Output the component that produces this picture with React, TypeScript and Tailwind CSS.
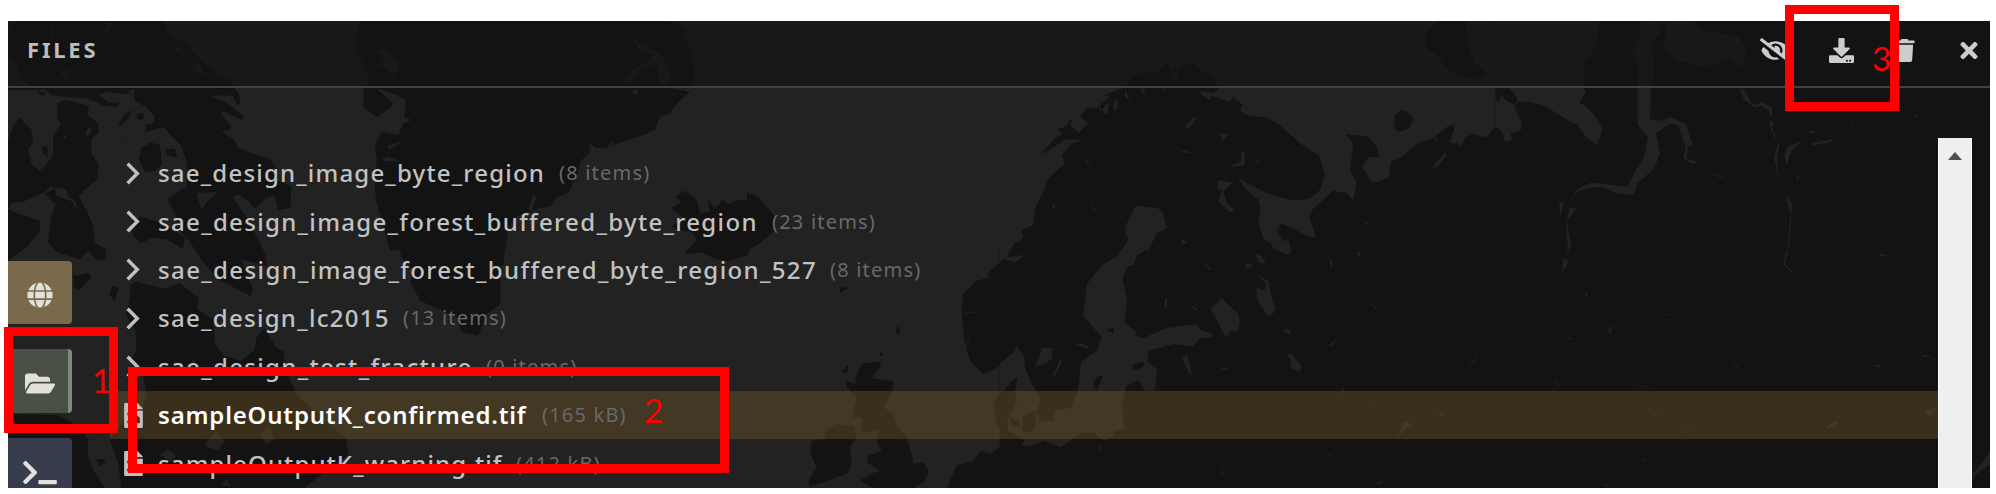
import { FaDownload, FaEyeSlash, FaFileImage, FaFolderOpen, FaGlobe, FaTerminal, FaTimes, FaTrash } from 'react-icons/fa';

type Patch = { land?: boolean; pts: string };

const northWest: Patch[] = [
  { land: true, pts: '24,63 490,63 510,110 560,130 600,180 650,220 690,240 720,290 712,312 690,270 24,270' },
  { pts: '30,100 40,70 60,63 24,63' },
  { pts: '24,170 50,195 60,235 100,265 24,265' },
  { pts: '310,100 320,70 340,66 325,100' },
  { pts: '150,85 160,75 158,120 148,110' },
  { pts: '520,150 545,140 560,180 545,165' },
  { pts: '560,210 600,190 615,225 585,215' },
  { pts: '180,212 210,207 200,220 210,240 190,230' },
  { land: true, pts: '1085,63 1501,63 1501,751 1170,751 1130,610 1125,570 1130,480 1125,435 1145,395 1195,405 1210,370 1235,360 1212,350 1218,300 1190,285 1130,265 1180,310 1170,325 1130,352 1090,320 1090,265 1110,250 1100,210 1070,160 1065,110' },
  { pts: '1130,150 1160,145 1200,190 1180,240 1165,210 1130,195 1150,180' },
  { pts: '1165,435 1208,425 1165,450' },
  { pts: '1140,480 1165,470 1205,485 1160,483' },
];

const southWest: Patch[] = [
  { land: true, pts: '1190,0 1501,-5 1501,180 1460,210 1435,275 1385,265 1370,220 1260,170 1230,110 1250,80 1210,50' },
];

const west: Patch[] = [
  { land: true, pts: '110,8 150,12 345,8 372,18 350,24 300,18 270,24 300,48 335,50 325,62 290,60 240,38 170,32 130,28' },
  { land: true, pts: '90,15 110,20 112,28 95,28' },
  { land: true, pts: '148,50 170,42 200,48 242,60 240,88 270,112 272,140 250,158 250,200 272,238 268,280 232,310 212,330 238,378 255,420 260,470 295,490 290,520 270,525 240,495 215,520 150,500 120,470 128,400 142,355 110,325 140,305 145,330 190,345 215,380 200,345 180,330 175,310 110,300 95,255 122,225 135,205 135,150 158,115 148,95' },
  { pts: '232,142 240,125 252,128 246,145 235,150' },
  { pts: '165,148 176,150 170,160' },
  { land: true, pts: '0,165 15,120 33,93 70,130 75,170 60,190 70,230 95,255 130,300 110,320 50,345 10,350 0,370' },
  { pts: '60,190 75,175 110,215 95,255 72,235' },
  { land: true, pts: '102,182 118,180 120,215 106,205' },
  { land: true, pts: '0,370 35,385 98,405 95,435 60,480 0,525' },
  { land: true, pts: '195,570 245,560 250,575 215,612 198,605' },
  { land: true, pts: '315,598 332,605 320,645 304,625' },
  { land: true, pts: '332,115 350,85 372,72 362,95 340,120' },
  { land: true, pts: '385,85 405,80 408,98 392,102' },
  { land: true, pts: '338,170 344,170 343,180' },
  { land: true, pts: '378,8 680,8 697,45 690,60 675,30 640,28 608,32 650,48 675,65 710,92 700,102 645,75 638,82 668,120 665,132 640,135 680,162 690,185 740,205 785,218 806,250 806,285 850,300 848,365 810,372 800,330 775,335 740,370 722,345 690,325 675,335 720,400 770,500 778,540 700,520 735,610 728,630 640,585 590,535 540,460 500,420 510,400 478,338 535,302 538,235 520,180 465,122 445,130 412,138 412,115 438,110 440,90 410,60 380,45' },
  { pts: '448,140 462,142 468,165 455,168' },
  { land: true, pts: '392,220 400,185 425,170 455,175 462,235 440,255 410,258' },
  { land: true, pts: '470,190 500,188 508,215 478,208' },
  { land: true, pts: '372,405 400,392 470,415 530,455 525,490 475,460 430,455 400,472 375,450' },
  { pts: '565,320 630,318 600,345 580,370' },
  { land: true, pts: '368,595 385,587 470,608 515,592 572,635 568,670 615,700 622,775 648,810 700,825 740,790 745,755 768,728 805,785 828,795 830,850 870,930 960,1010 1016,1060 1020,1110 960,1150 890,1206 275,1206 300,1120 250,1085 245,1060 330,1000 395,980 415,930 385,870 370,830 385,790 382,730 355,690 365,640' },
  { pts: '370,850 405,870 415,920 400,985 350,1000 305,1060 330,1130 340,1206 275,1206 285,1120 245,1080 250,1050 330,1000' },
  { pts: '600,1060 625,1035 650,1065 630,1095 590,1080' },
  { pts: '755,1045 785,1022 800,1060 775,1075' },
  { pts: '455,1105 480,1090 505,1110 490,1130' },
  { pts: '640,1200 655,1180 668,1200' },
  { pts: '550,815 562,825 555,840' },
  { land: true, pts: '0,985 150,988 205,1018 240,1060 240,1110 255,1150 290,1206 0,1206' },
  { land: true, pts: '262,1120 285,1118 292,1130 275,1142' },
];

const north: Patch[] = [
  { land: true, pts: '-1,63 565,63 550,110 575,150 585,240 560,265 510,265 570,275 530,310 510,340 480,350 465,390 430,405 370,425 340,435 335,420 320,445 285,443 265,425 272,455 240,485 230,530 205,580 170,590 150,620 115,625 45,650 25,690 15,751 -1,751' },
  { pts: '505,63 545,80 575,90 570,63' },
  { pts: '378,95 420,130 465,150 500,190 515,240 495,262 475,240 470,195 420,210 400,240 365,255 390,215 440,185 460,165 420,150' },
  { pts: '388,278 415,268 410,285 400,280' },
  { pts: '-1,751 25,710 10,740' },
  { land: true, pts: '555,572 590,600 600,640 630,635 622,598 645,625 670,598 685,612 715,600 740,600 742,575 775,590 795,615 825,650 820,695 780,730 740,752 560,752 590,720 580,700 545,690 515,680 548,650 512,625 545,605 525,590' },
  { pts: '98,585 110,590 95,630 85,630' },
  { land: true, pts: '985,185 998,188 990,198' },
];

const northCentral: Patch[] = [
  { land: true, pts: '555,20 600,0 760,-5 740,35 680,52 640,42 605,25 560,30' },
  { land: true, pts: '-1,0 15,5 10,60 -1,70' },
  { land: true, pts: '1018,132 1048,128 1022,148' },
  { land: true, pts: '1195,245 1202,262 1193,275 1187,258' },
  { land: true, pts: '1140,322 1150,332 1138,338' },
  { land: true, pts: '1047,362 1040,390 1022,382' },
  { land: true, pts: '1085,360 1143,352 1140,370 1115,402 1180,412 1178,440 1150,490 1180,510 1190,545 1220,580 1235,630 1240,660 1270,655 1288,685 1270,715 1240,733 1120,733 1080,710 1110,690 1140,680 1100,655 1105,635 1145,620 1130,590 1135,560 1085,565 1085,520 1055,520 1070,460 1040,430 1040,410 1065,420 1070,390' },
  { land: true, pts: '1010,540 1060,545 1070,580 1050,610 1055,660 1040,690 930,728 925,710 950,670 930,625 935,590 975,585 980,555' },
  { land: true, pts: '1501,55 1460,90 1470,100 1430,110 1390,150 1385,200 1393,290 1410,350 1450,390 1501,365' },
  { pts: '1388,206 1450,203 1400,210' },
  { pts: '1398,320 1410,280 1416,260 1404,290' },
  { land: true, pts: '1501,440 1480,480 1490,540 1501,560' },
  { land: true, pts: '1501,610 1470,630 1440,620 1420,650 1370,665 1350,710 1340,733 1501,733' },
];

const northEast: Patch[] = [
  { land: true, pts: '120,465 170,410 190,402 172,388 200,378 215,352 212,375 235,400 265,370 240,350 260,325 290,325 330,290 310,285 370,265 405,225 440,215 470,215 505,185 510,210 580,190 610,215 650,240 655,270 625,285 690,305 700,290 728,315 720,330 745,348 800,352 845,380 900,430 960,470 975,525 960,570 930,595 885,602 800,580 740,550 712,530 735,565 775,600 782,630 775,665 790,715 825,752 35,752 70,710 65,690 100,675 105,625 130,575 145,535 195,490 185,465 215,430 250,420 200,418' },
  { pts: '300,335 330,300 320,345 295,318' },
  { pts: '345,300 355,295 350,330 340,325' },
  { pts: '375,270 390,300 375,290' },
  { pts: '420,270 432,262 435,285' },
  { pts: '485,275 495,245 492,270' },
  { pts: '510,235 535,205 530,240' },
  { pts: '556,380 580,352 593,353 565,386' },
  { pts: '650,402 687,402 665,428 665,410' },
  { pts: '725,455 735,455 733,495 700,502 695,495 722,485' },
  { pts: '250,472 275,490 262,487' },
  { pts: '520,443 570,457 560,460' },
  { pts: '655,540 700,548 690,556 670,575 680,610 705,632 690,637 655,605 668,566 652,570' },
  { pts: '270,612 292,635 283,635' },
  { pts: '155,615 168,618 160,630' },
  { pts: '407,617 475,625 490,640 500,685 470,700 445,752 365,752 385,718 375,700 378,675 388,655' },
  { pts: '542,715 565,730 545,733' },
  { pts: '765,468 775,485 768,485' },
  { pts: '592,273 640,280 628,300' },
  { land: true, pts: '1205,330 1222,335 1243,357 1225,387 1195,395 1182,380 1185,345' },
  { land: true, pts: '1035,402 1105,410 1130,440 1137,470 1105,472 1085,500 1115,545 1140,545 1167,530 1172,485 1200,475 1260,425 1290,420 1345,378 1365,375 1350,430 1375,430 1385,440 1395,412 1420,402 1460,412 1475,390 1501,375 1501,752 875,752 865,720 850,722 830,690 845,670 930,712 948,710 928,650 940,625 1000,572 1040,580 1060,602 1070,545 1050,512 1060,430' },
  { pts: '1305,490 1335,458 1340,465 1320,490 1298,510' },
  { pts: '1303,412 1312,410 1308,425' },
  { pts: '1085,655 1108,675 1100,675' },
  { land: true, pts: '1315,63 1400,63 1405,140 1425,190 1465,225 1440,238 1380,230 1345,210 1310,165 1280,145 1280,95' },
];

const southEast: Patch[] = [
  { land: true, pts: '-1,-5 1501,-5 1501,735 -1,735' },
  { pts: '-1,-5 45,-5 20,40 75,33 45,55 10,45 -1,55' },
  { pts: '370,-5 447,-5 442,15 410,35 402,62 380,70 368,105 382,175 372,235 410,265 405,275 430,282 500,252 590,240 605,260 635,268 637,280 600,283 578,308 520,300 445,320 442,355 470,375 467,425 460,442 435,440 415,408 380,425 365,480 373,555 340,560 340,575 315,592 285,570 250,565 180,610 135,590 95,605 60,605 75,590 25,560 20,535 50,475 45,445 52,402 30,415 15,440 -1,440 -1,360 45,320 48,302 58,320 70,330 75,370 90,410 122,465 110,505 125,535 160,530 165,500 215,490 235,430 243,355 270,335 293,318 305,280 250,215 260,120 310,60 355,35' },
  { land: true, pts: '70,515 110,498 105,550 90,568 65,560' },
  { land: true, pts: '30,520 55,530 60,550 38,550' },
  { land: true, pts: '310,393 290,440 280,420 290,400' },
  { land: true, pts: '397,362 433,352 430,368 400,382' },
  { land: true, pts: '320,255 342,253 340,270' },
  { pts: '812,-5 875,-5 875,20 865,32 820,15' },
  { pts: '665,163 715,210 720,238 712,260 690,262 678,280 632,195' },
  { pts: '763,28 785,38 798,57 778,57' },
  { pts: '735,60 755,58 755,70 740,72' },
  { pts: '770,93 805,110 815,165 828,190 820,208 802,215 770,165 770,130 795,140 800,120' },
  { pts: '608,52 635,78 628,80' },
  { pts: '125,312 158,312 155,345 130,362 105,365 120,335' },
  { pts: '180,345 187,350 165,395 160,392' },
  { pts: '228,302 245,298 268,310 262,315' },
  { pts: '545,338 562,332 570,365 577,395 565,385' },
  { pts: '860,332 872,328 905,365 900,385 870,372 875,355' },
  { pts: '850,255 872,257 872,270 855,268' },
  { pts: '495,165 503,158 500,180 503,195 493,185' },
  { pts: '570,187 592,192 590,200' },
  { pts: '1068,22 1085,28 1075,40' },
  { pts: '663,376 675,368 687,380' },
  { pts: '990,45 996,48 996,78 991,65' },
  { pts: '1108,175 1133,195 1125,195' },
  { pts: '985,303 1010,288 995,307' },
  { pts: '1405,360 1435,338 1420,358' },
  { pts: '1030,420 1033,465 1027,440' },
  { pts: '1090,492 1125,488 1112,494' },
  { pts: '1305,505 1338,513 1325,516' },
  { pts: '1185,595 1215,530 1235,540 1210,560' },
  { pts: '665,660 670,690 665,698' },
  { pts: '1125,720 1155,707 1140,720' },
  { pts: '990,627 995,630 985,645' },
  { pts: '298,603 303,610 295,628' },
];

const farNorthEast: Patch[] = [
  { land: true, pts: '-1,63 1482,63 1482,752 -1,752' },
  { pts: '-1,63 310,63 300,140 265,190 262,260 270,275 250,310 265,315 295,345 320,385 303,437 270,410 245,375 215,360 150,320 100,305 70,305 55,320 78,370 75,390 45,400 47,420 25,425 20,400 -1,380' },
  { land: true, pts: '-1,265 40,265 65,295 60,315 35,305 15,285 8,310 -1,290' },
  { pts: '435,63 500,63 490,100 465,130 475,220 465,260 462,360 490,362 525,352 570,372 590,435 575,440 572,475 610,488 585,490 562,475 570,440 545,375 520,372 480,400 492,460 475,505 425,550 412,585 360,580 320,560 275,565 245,575 220,605 245,568 285,548 350,555 395,560 420,510 445,470 455,410 425,375 425,270 430,200 408,150 430,110' },
  { pts: '510,63 590,63 620,90 725,110 755,150 735,200 700,180 620,200 540,180 505,150' },
  { pts: '728,265 745,268 765,308 780,315 800,305 830,325 825,355 818,330 795,318 775,322 745,300' },
  { pts: '190,610 205,605 192,650' },
  { pts: '220,625 240,625 212,665 225,735 222,752 215,740 210,670' },
  { pts: '820,360 832,365 830,390 850,440 842,470 850,545 842,510 835,475 845,430 825,390' },
  { pts: '868,580 888,610 885,660 878,745 875,745 883,640' },
  { pts: '878,437 918,425 885,455 872,495 865,465' },
  { pts: '943,430 1000,420 1012,412 1008,425 950,437' },
  { pts: '940,390 965,397 945,400' },
  { pts: '900,530 912,524 905,538' },
  { pts: '620,510 640,520 692,532 665,530' },
  { pts: '1062,352 1075,378 1070,375' },
  { pts: '1250,340 1268,350 1258,350' },
];

const farSouthEast: Patch[] = [
  { land: true, pts: '-1,-5 1482,-5 1482,735 -1,735' },
  { pts: '215,-5 230,2 215,33 212,15' },
  { pts: '200,42 220,50 200,83' },
  { pts: '875,-5 880,-5 868,60 905,100 862,62' },
  { pts: '265,142 275,150 272,163' },
  { pts: '343,238 346,265 336,267' },
  { pts: '215,278 226,283 223,292' },
  { pts: '500,206 525,215 510,214' },
  { pts: '745,27 762,42 755,40' },
  { pts: '1148,28 1182,36 1155,36' },
  { pts: '170,400 195,425 185,422' },
  { pts: '410,415 465,434 450,432' },
  { pts: '708,356 732,370 720,368' },
  { pts: '743,388 758,408 750,402' },
  { pts: '1125,362 1155,363 1153,371' },
  { pts: '1255,375 1280,333 1300,337 1325,350 1300,340 1280,338' },
  { pts: '470,515 490,500 478,516' },
  { pts: '565,565 588,552 575,566' },
  { pts: '985,553 1020,528 1028,537 1000,552' },
  { pts: '1287,502 1327,488 1300,518' },
  { pts: '1430,690 1482,625 1482,662 1440,690 1430,710' },
  { pts: '438,637 452,650 445,650' },
  { pts: '510,635 540,660 530,655' },
  { pts: '315,715 340,727 332,728' },
];

const tiles: { at: string; patches: Patch[] }[] = [
  { at: 'translate(0 0)', patches: northWest },
  { at: 'translate(0 732)', patches: southWest },
  { at: 'translate(24 258)', patches: west },
  { at: 'translate(1500 0)', patches: north },
  { at: 'translate(1500 732)', patches: northCentral },
  { at: 'translate(3000 732)', patches: southEast },
  { at: 'translate(3000 0)', patches: northEast },
  { at: 'translate(4488 732)', patches: farSouthEast },
  { at: 'translate(4488 0)', patches: farNorthEast },
];

function BaseMap() {
  return (
    <svg className="absolute inset-0 h-full w-full" viewBox="24 63 5946 1401" preserveAspectRatio="none" aria-hidden="true">
      {tiles.map((tile) => (
        <g key={tile.at} transform={tile.at}>
          {tile.patches.map((p) => (
            <polygon key={p.pts} points={p.pts} fill={p.land ? '#131313' : '#222222'} />
          ))}
        </g>
      ))}
    </svg>
  );
}

function Chevron() {
  return (
    <svg className="ml-[2px] h-[23px] w-[14px]" viewBox="0 0 14 23" fill="none" stroke="currentColor" strokeWidth="3.4">
      <path d="M1.6 1.8 11.3 11.5 1.6 21.2" />
    </svg>
  );
}

const rows = [
  { name: 'sae_design_image_byte_region', meta: '(8 items)', cls: 'w-[401px] tracking-[1.19px]', folder: true },
  { name: 'sae_design_image_forest_buffered_byte_region', meta: '(23 items)', cls: 'w-[614px] tracking-[1.33px]', folder: true },
  { name: 'sae_design_image_forest_buffered_byte_region_527', meta: '(8 items)', cls: 'w-[672px] tracking-[1.38px]', folder: true },
  { name: 'sae_design_lc2015', meta: '(13 items)', cls: 'w-[245px] tracking-[1.29px]', folder: true },
  { name: 'sae_design_test_fracture', meta: '(0 items)', cls: 'w-[328px] tracking-[1.34px]', folder: true },
  { name: 'sampleOutputK_confirmed.tif', meta: '(165 kB)', cls: 'w-[384px] tracking-[0.8px]', selected: true },
  { name: 'sampleOutputK_warning.tif', meta: '(412 kB)', cls: 'w-[358px] tracking-[1.12px]' },
];

export default function App() {
  return (
    <div className="relative h-[494px] w-[1996px] overflow-hidden bg-white pt-[21px] pl-2 font-['Noto_Sans',sans-serif]">
      <main className="relative flex h-[467px] w-[1982px] flex-col overflow-hidden bg-[#222222]">
        <BaseMap />
        <header className="relative flex h-[67px] shrink-0 items-center border-b-2 border-[#414141] bg-[#141414]/65 pr-[12px] pl-[19px] text-[#cccccc]">
          <h1 className="mt-[-8px] grow text-[22px] font-bold tracking-[2.8px] text-[#bdbdbd]">FILES</h1>
          <div className="mt-[-6px] flex items-center text-[25px]">
            <FaEyeSlash className="mr-[38px] h-[25px] w-[31px]" />
            <FaDownload className="mr-[40px]" />
            <FaTrash className="mr-[45px] h-[23px] w-[21px]" />
            <FaTimes className="w-[18px]" />
          </div>
        </header>
        <div className="relative flex min-h-0 grow">
          <nav className="flex w-[102px] shrink-0 flex-col gap-[25px] pt-[173px] text-[26px] text-[#e2e0da]">
            <button className="flex h-[63px] w-16 shrink-0 items-center justify-center rounded-r bg-[#7a6a4b] pt-1"><FaGlobe /></button>
            <button className="flex h-16 w-16 shrink-0 items-center justify-center rounded-r border-r-4 border-[#7c8b76] bg-[#4a4f46] pt-1 pl-1"><FaFolderOpen className="h-[27px] w-[30px]" /></button>
            <button className="flex h-16 w-16 shrink-0 items-center justify-center rounded-r bg-[#383d4e] pt-1"><FaTerminal className="h-[27px] w-[34px]" /></button>
          </nav>
          <ul className="mt-[61px] grow">
            {rows.map((r) => (
              <li key={r.name} className={r.selected ? 'flex h-[48.4px] items-center bg-[#745b27]/40' : 'flex h-[48.4px] items-center'}>
                <span className="flex w-12 shrink-0 pl-[14px] text-[25px] text-[#c0c0c0]">
                  {r.folder ? <Chevron /> : <FaFileImage className="h-[25px] w-[19px]" />}
                </span>
                <span className={`${r.cls} shrink-0 text-2xl whitespace-nowrap ${r.selected ? 'font-semibold text-white' : 'font-medium text-[#c2c2c2]'}`}>{r.name}</span>
                <span className="text-[20px] tracking-[1.2px] whitespace-nowrap text-[#696969]">{r.meta}</span>
              </li>
            ))}
          </ul>
          <div className="mt-[50px] mr-[18px] flex w-[34px] shrink-0 justify-center border-x border-white bg-[#efefef] pt-[14px]">
            <svg className="h-2 w-[14px]" viewBox="0 0 14 8"><path d="M0 8 7 0l7 8z" fill="#505050" /></svg>
          </div>
        </div>
      </main>
      <span className="absolute top-[360px] left-[92px] font-['Lato',sans-serif] text-[33px] leading-10 text-[#ff0000]">1</span>
      <span className="absolute top-[390px] left-[644px] font-['Lato',sans-serif] text-[33px] leading-10 text-[#ff0000]">2</span>
      <span className="absolute top-[38px] left-[1872px] font-['Lato',sans-serif] text-[33px] leading-10 text-[#ff0000]">3</span>
      <div className="absolute top-[327px] left-1 h-[106px] w-[114px] border-[9px] border-[#ff0000]" />
      <div className="absolute top-[367px] left-32 h-[106px] w-[601px] border-[9px] border-[#ff0000]" />
      <div className="absolute top-[5px] left-[1785px] h-[106px] w-[114px] border-[9px] border-[#ff0000]" />
    </div>
  );
}
